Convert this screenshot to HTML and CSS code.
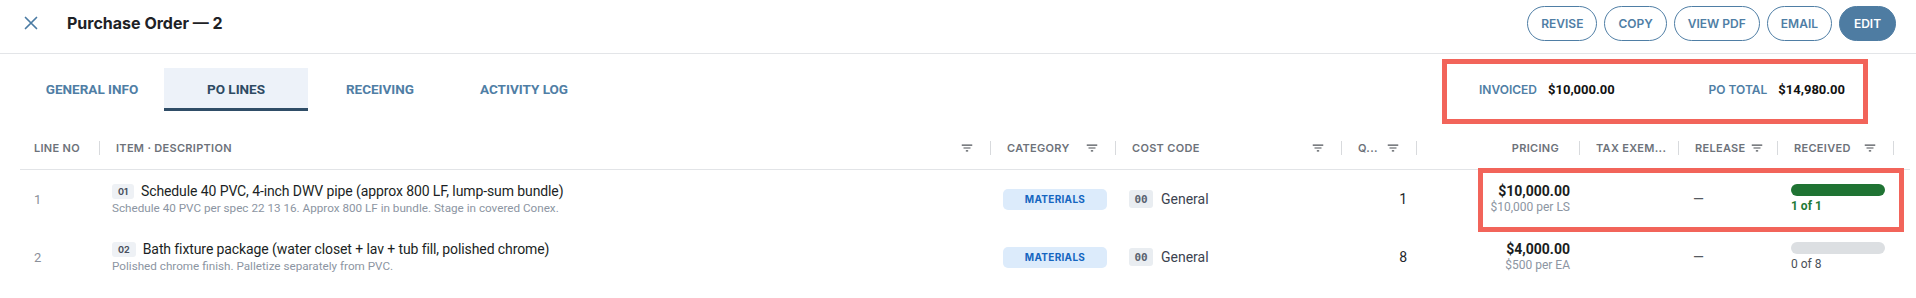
FILE: index.html
```html
<!DOCTYPE html>
<html lang="en">
<head>
    <meta charset="UTF-8">
    <meta name="viewport" content="width=device-width, initial-scale=1.0">
    <title>Purchase Order — 2</title>
    <link rel="stylesheet" href="styles.css">
</head>
<body>
    <header class="topbar">
        <div class="topbar-left">
            <button class="close-btn" aria-label="Close">
                <svg width="14" height="14" viewBox="0 0 14 14"><path d="M1.5 1.5l11 11M12.5 1.5l-11 11" stroke="#4a7ba3" stroke-width="1.7" stroke-linecap="round" fill="none"/></svg>
            </button>
            <h1>Purchase Order — 2</h1>
        </div>
        <div class="actions">
            <button class="pill">Revise</button>
            <button class="pill">Copy</button>
            <button class="pill">View PDF</button>
            <button class="pill">Email</button>
            <button class="pill primary">Edit</button>
        </div>
    </header>

    <section class="subbar">
        <nav class="tabs">
            <a class="tab">General Info</a>
            <a class="tab active">PO Lines</a>
            <a class="tab">Receiving</a>
            <a class="tab">Activity Log</a>
        </nav>
        <div class="summary">
            <div class="stat"><span class="stat-label">Invoiced</span><span class="stat-value">$10,000.00</span></div>
            <div class="stat"><span class="stat-label">PO Total</span><span class="stat-value">$14,980.00</span></div>
        </div>
    </section>

    <div class="lines">
        <!-- header -->
        <div class="th th-first">Line No</div>
        <div class="th has-filter">Item · Description<svg class="filter" viewBox="0 0 24 24"><path d="M10 18h4v-2h-4v2zM3 6v2h18V6H3zm3 7h12v-2H6v2z"/></svg></div>
        <div class="th has-filter">Category<svg class="filter" viewBox="0 0 24 24"><path d="M10 18h4v-2h-4v2zM3 6v2h18V6H3zm3 7h12v-2H6v2z"/></svg></div>
        <div class="th has-filter">Cost Code<svg class="filter" viewBox="0 0 24 24"><path d="M10 18h4v-2h-4v2zM3 6v2h18V6H3zm3 7h12v-2H6v2z"/></svg></div>
        <div class="th has-filter">Q...<svg class="filter" viewBox="0 0 24 24"><path d="M10 18h4v-2h-4v2zM3 6v2h18V6H3zm3 7h12v-2H6v2z"/></svg></div>
        <div class="th th-right"><span class="th-label">Pricing</span></div>
        <div class="th">Tax Exem...</div>
        <div class="th th-inline">Release<svg class="filter" viewBox="0 0 24 24"><path d="M10 18h4v-2h-4v2zM3 6v2h18V6H3zm3 7h12v-2H6v2z"/></svg></div>
        <div class="th has-filter">Received<svg class="filter" viewBox="0 0 24 24"><path d="M10 18h4v-2h-4v2zM3 6v2h18V6H3zm3 7h12v-2H6v2z"/></svg></div>
        <div class="th th-blank"></div>

        <!-- row 1 -->
        <div class="td line-no">1</div>
        <div class="td item">
            <div>
                <div class="item-title"><span class="item-no">01</span>Schedule 40 PVC, 4-inch DWV pipe (approx 800 LF, lump-sum bundle)</div>
                <div class="item-sub">Schedule 40 PVC per spec 22 13 16. Approx 800 LF in bundle. Stage in covered Conex.</div>
            </div>
        </div>
        <div class="td cat"><span class="chip">Materials</span></div>
        <div class="td cost"><span class="code">00</span>General</div>
        <div class="td qty">1</div>
        <div class="td price">
            <div class="price-total">$10,000.00</div>
            <div class="price-unit">$10,000 per LS</div>
        </div>
        <div class="td"></div>
        <div class="td release">—</div>
        <div class="td received">
            <div class="bar"><div class="bar-fill" style="width: 100%"></div></div>
            <div class="recv-label done">1 of 1</div>
        </div>
        <div class="td"></div>

        <!-- row 2 -->
        <div class="td line-no">2</div>
        <div class="td item">
            <div>
                <div class="item-title"><span class="item-no">02</span>Bath fixture package (water closet + lav + tub fill, polished chrome)</div>
                <div class="item-sub">Polished chrome finish. Palletize separately from PVC.</div>
            </div>
        </div>
        <div class="td cat"><span class="chip">Materials</span></div>
        <div class="td cost"><span class="code">00</span>General</div>
        <div class="td qty">8</div>
        <div class="td price">
            <div class="price-total">$4,000.00</div>
            <div class="price-unit">$500 per EA</div>
        </div>
        <div class="td"></div>
        <div class="td release">—</div>
        <div class="td received">
            <div class="bar"><div class="bar-fill" style="width: 0%"></div></div>
            <div class="recv-label">0 of 8</div>
        </div>
        <div class="td"></div>

        <div class="callout"></div>
    </div>
</body>
</html>
```

FILE: styles.css
```css
* {
    margin: 0;
    padding: 0;
    box-sizing: border-box;
}

body {
    font-family: Inter, "Noto Sans", sans-serif;
    background: #fff;
    color: #1c1f24;
    width: 1916px;
    height: 298px;
    overflow: hidden;
}

button {
    font-family: inherit;
    cursor: pointer;
}

/* top bar */
.topbar {
    height: 54px;
    display: flex;
    align-items: center;
    justify-content: space-between;
    padding: 0 20px 7px 22px;
    border-bottom: 1px solid #e3e5e8;
}

.topbar-left {
    display: flex;
    align-items: center;
}

.close-btn {
    width: 18px;
    height: 18px;
    border: none;
    background: none;
    display: flex;
    align-items: center;
    justify-content: center;
}

h1 {
    margin-left: 27px;
    font-size: 16px;
    font-weight: 700;
    color: #1e2226;
}

.actions {
    display: flex;
    gap: 7px;
}

.pill {
    height: 35px;
    min-width: 57px;
    padding: 0 13px;
    border: 1px solid #4f7ea5;
    border-radius: 18px;
    background: #fff;
    color: #4f7ea5;
    font-size: 12px;
    font-weight: 600;
    text-transform: uppercase;
}

.pill.primary {
    background: #4e7ca2;
    border-color: #4e7ca2;
    color: #fff;
}

/* tabs + totals */
.subbar {
    height: 73px;
    display: flex;
    justify-content: space-between;
    align-items: flex-start;
    padding: 0 48px 0 20px;
}

.tabs {
    display: flex;
    margin-top: 14px;
}

.tab {
    width: 144px;
    height: 43px;
    display: flex;
    align-items: center;
    justify-content: center;
    padding-top: 2px;
    border-bottom: 3px solid transparent;
    font-family: Roboto, sans-serif;
    font-size: 13.5px;
    font-weight: 700;
    color: #4f7ea5;
    text-transform: uppercase;
}

.tab.active {
    background: #edf2f9;
    color: #2d4a63;
    border-bottom-color: #2f4d67;
}

.summary {
    margin-top: 5px;
    width: 426px;
    height: 65px;
    border: 5px solid #f2645a;
    display: flex;
    align-items: center;
    justify-content: space-between;
    padding: 0 18px 5px 32px;
}

.stat {
    display: flex;
    align-items: baseline;
    gap: 11px;
}

.stat-label {
    font-size: 12px;
    font-weight: 600;
    color: #4f7ea5;
    text-transform: uppercase;
}

.stat-value {
    font-family: Roboto, sans-serif;
    font-size: 13px;
    font-weight: 700;
    color: #111;
}

/* lines table */
.lines {
    position: relative;
    margin: 0 20px;
    display: grid;
    grid-template-columns: 80px 891px 125px 226px 75px 163px 99px 99px 116px 1fr;
}

.th {
    height: 43px;
    display: flex;
    align-items: center;
    padding-left: 16px;
    border-bottom: 1px solid #e2e4e7;
    font-size: 11px;
    font-weight: 600;
    letter-spacing: 0.3px;
    color: #6d727a;
    text-transform: uppercase;
    white-space: nowrap;
}

.th::after {
    content: "";
    flex: none;
    width: 1px;
    height: 14px;
    margin-left: auto;
    background: #d8dadd;
}

.th-first {
    padding-left: 14px;
}

.th .filter {
    flex: none;
    width: 14px;
    height: 14px;
    fill: #4f5358;
    margin-left: auto;
    margin-right: 16px;
}

.th.has-filter::after {
    margin-left: 0;
}

.th-inline .filter {
    margin-left: 4px;
    margin-right: 0;
}

.th-right .th-label {
    margin-left: auto;
}

.th-right::after {
    margin-left: 20px;
}

.th-blank::after {
    display: none;
}

.td {
    height: 58px;
    display: flex;
    align-items: center;
    font-family: Roboto, sans-serif;
    font-size: 14px;
    color: #22262b;
}

.line-no {
    padding-left: 14px;
    font-size: 13px;
    color: #8b9099;
}

.item {
    padding-left: 12px;
}

.item-title {
    display: flex;
    align-items: center;
    gap: 7px;
    line-height: 17px;
    letter-spacing: -0.1px;
    color: #1b1f24;
}

.item-no {
    padding: 2px 6px;
    border-radius: 3px;
    background: #eef1f5;
    color: #4a5160;
    font-family: Inter, sans-serif;
    font-size: 9px;
    font-weight: 700;
    letter-spacing: 0;
    line-height: 11px;
}

.item-sub {
    margin-top: 1px;
    font-size: 11.7px;
    line-height: 14px;
    color: #8c95a2;
}

.cat {
    padding-left: 12px;
}

.chip {
    width: 104px;
    height: 21px;
    display: flex;
    align-items: center;
    justify-content: center;
    border-radius: 5px;
    background: #dcebfb;
    color: #1565c0;
    font-family: Inter, sans-serif;
    font-size: 10px;
    font-weight: 700;
    letter-spacing: 0.3px;
    text-transform: uppercase;
}

.cost {
    padding-left: 13px;
    color: #3c4350;
}

.code {
    width: 24px;
    height: 18px;
    margin-right: 8px;
    display: flex;
    align-items: center;
    justify-content: center;
    border-radius: 3px;
    background: #e9edf1;
    color: #5a6270;
    font-family: "DejaVu Sans Mono", monospace;
    font-size: 11px;
    font-weight: 700;
}

.qty {
    justify-content: flex-end;
    padding-right: 10px;
}

.price {
    flex-direction: column;
    align-items: flex-end;
    justify-content: center;
    padding-right: 10px;
}

.price-total {
    font-weight: 700;
    line-height: 17px;
    color: #1a1d21;
}

.price-unit {
    font-size: 12px;
    line-height: 15px;
    color: #8c95a2;
}

.release {
    padding-left: 14px;
    color: #555a61;
}

.received {
    flex-direction: column;
    align-items: stretch;
    justify-content: center;
    padding: 0 9px 0 13px;
}

.bar {
    height: 12px;
    border-radius: 6px;
    background: #dcdfe2;
    overflow: hidden;
}

.bar-fill {
    height: 100%;
    background: #1f7333;
}

.recv-label {
    margin-top: 3px;
    font-size: 12px;
    line-height: 15px;
    color: #4a4f57;
}

.recv-label.done {
    font-weight: 700;
    color: #1e7a35;
}

/* highlight drawn over the first line's money columns */
.callout {
    position: absolute;
    left: 1458px;
    top: 41px;
    width: 426px;
    height: 64px;
    border: 5px solid #f2645a;
    pointer-events: none;
}
```
